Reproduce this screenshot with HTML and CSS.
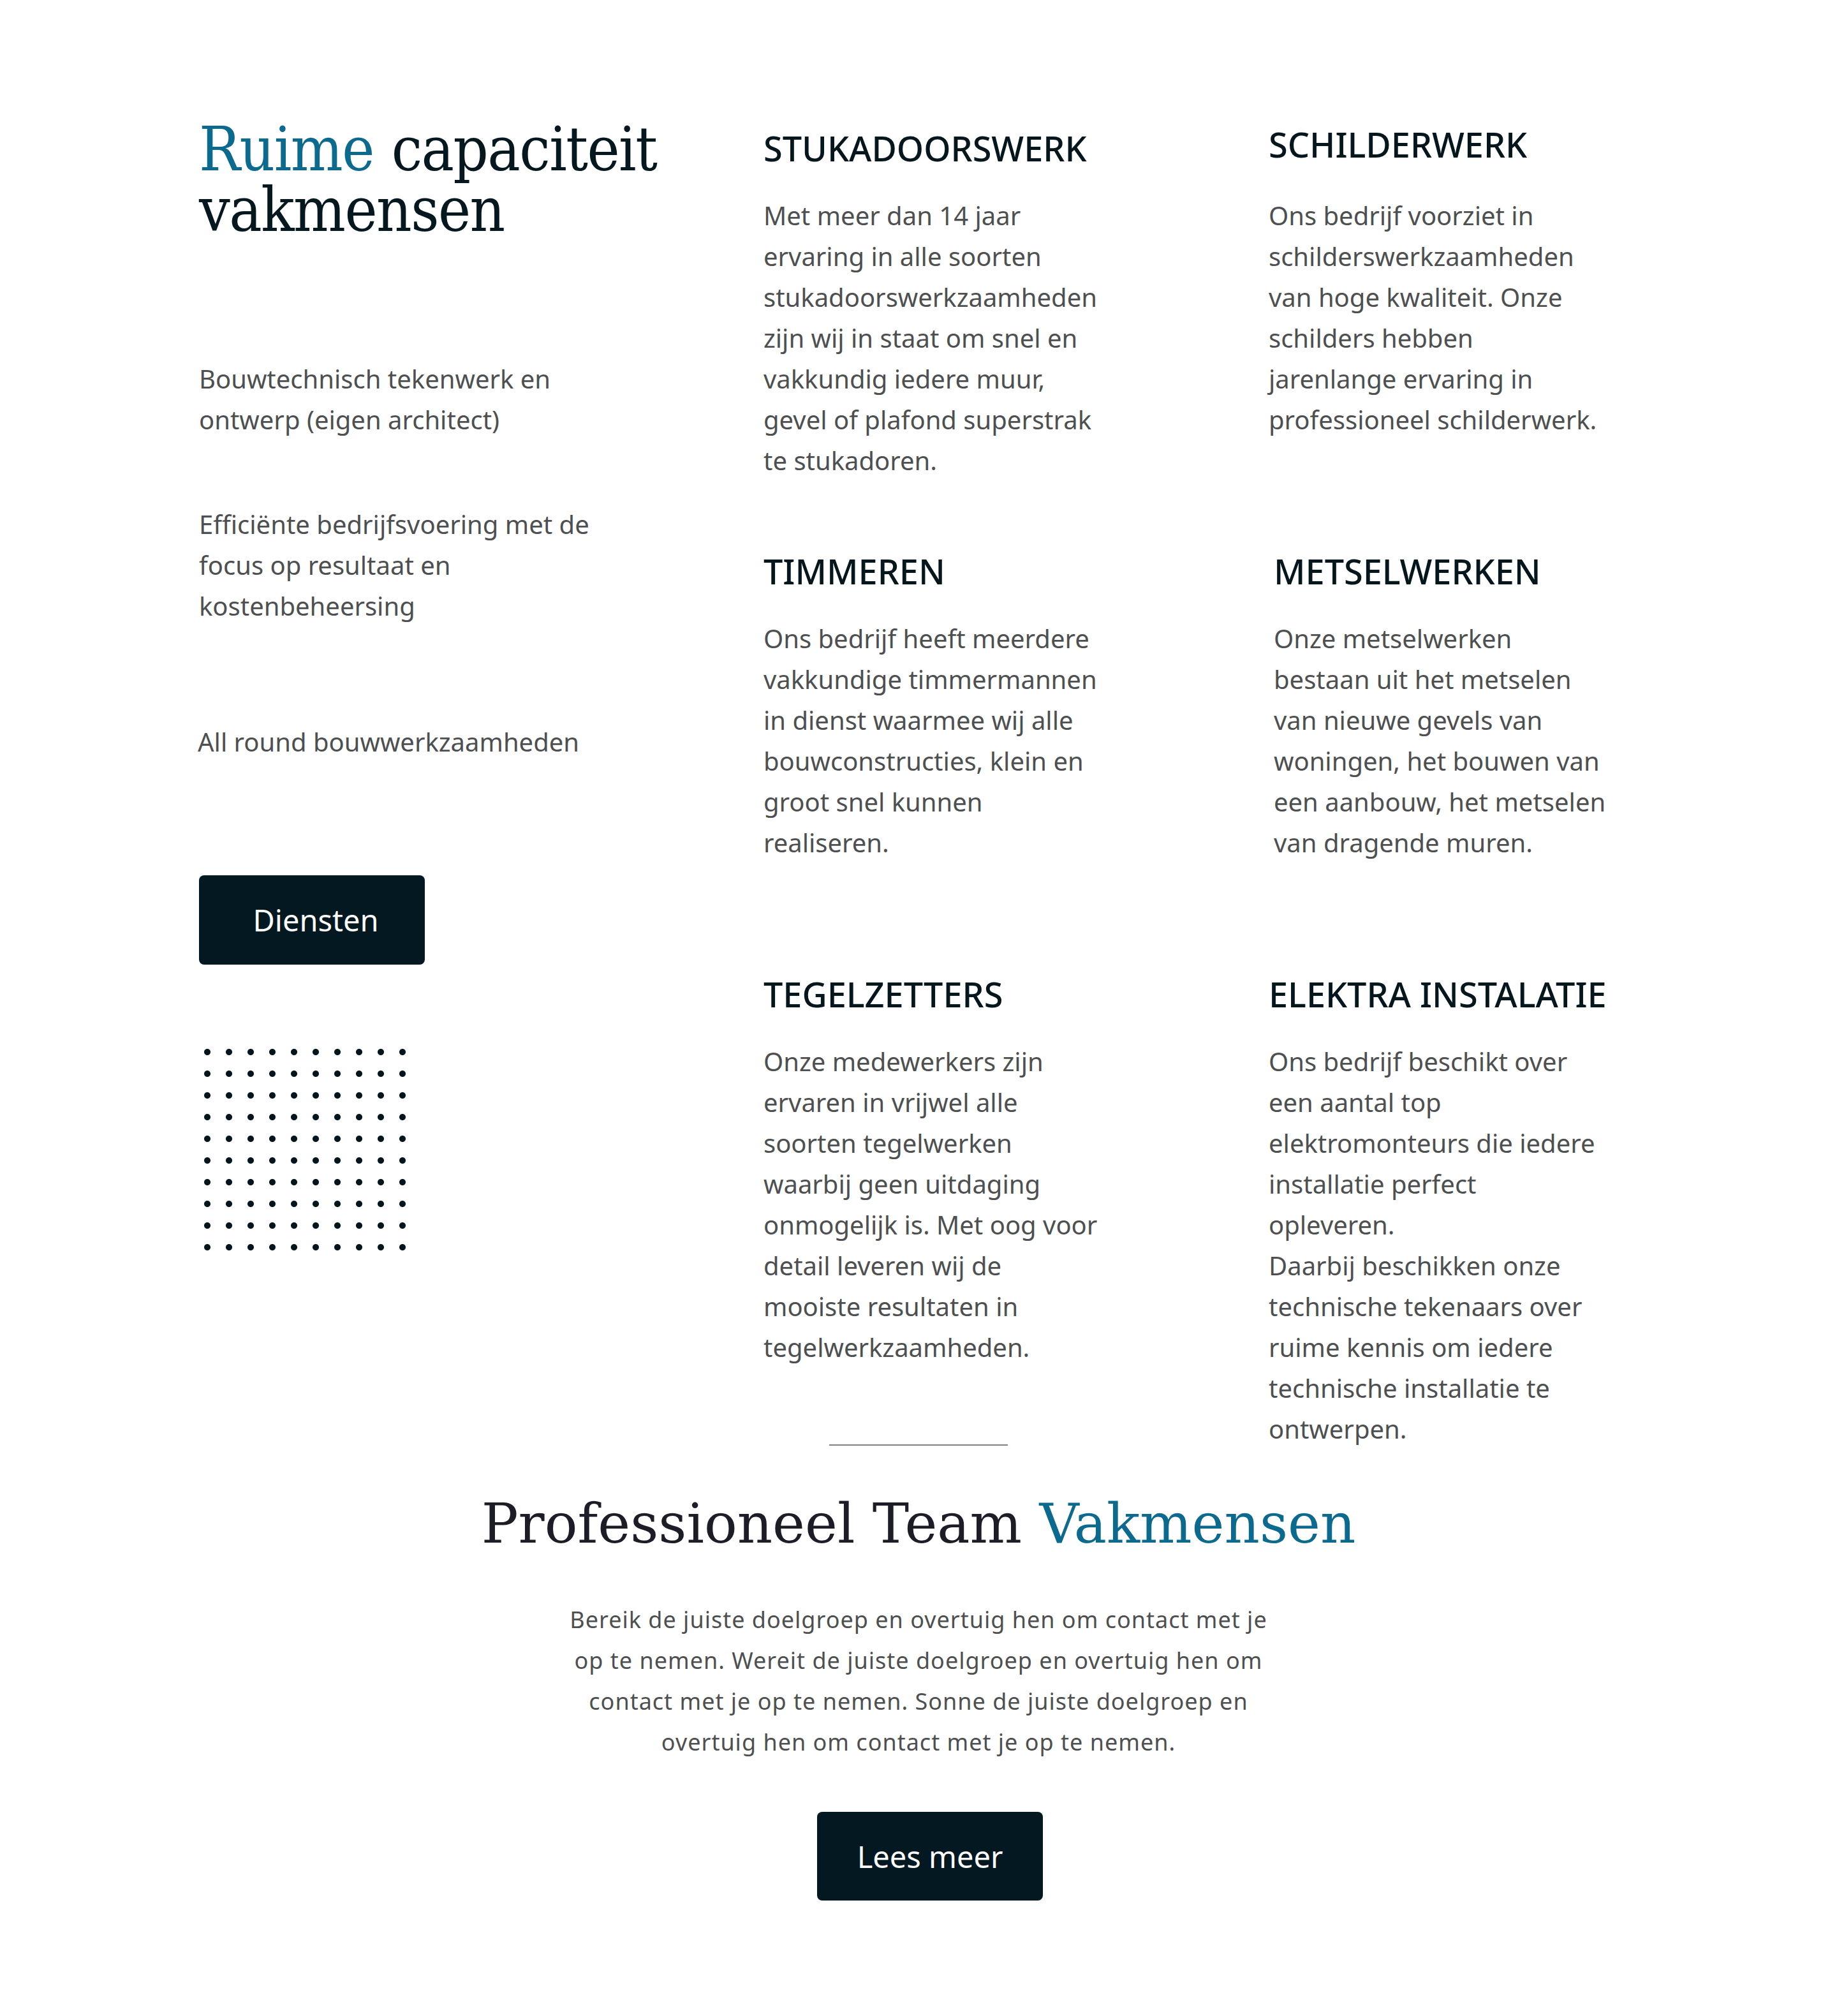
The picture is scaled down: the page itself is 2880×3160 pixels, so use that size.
FILE: index.html
```html
<!DOCTYPE html>
<html lang="nl">
<head>
<meta charset="utf-8">
<title>Ruime capaciteit vakmensen</title>
<link rel="stylesheet" href="styles.css">
</head>
<body>
<main class="page">
  <section class="top">
    <div class="intro">
      <h1 class="intro__title"><span class="accent">Ruime</span> <span>capaciteit</span> <span>vakmensen</span></h1>
      <p class="intro__item intro__item--1">Bouwtechnisch tekenwerk en ontwerp (eigen architect)</p>
      <p class="intro__item intro__item--2">Efficiënte bedrijfsvoering met de focus op resultaat en kostenbeheersing</p>
      <p class="intro__item intro__item--3">All round bouwwerkzaamheden</p>
      <a class="btn intro__btn" href="#">Diensten</a>
      <div class="dots"></div>
    </div>

    <article class="svc">
      <h3 class="svc__title">STUKADOORSWERK</h3>
      <p class="svc__text">Met meer dan 14 jaar ervaring in alle soorten stukadoorswerkzaamheden zijn wij in staat om snel en vakkundig iedere muur, gevel of plafond superstrak te stukadoren.</p>
    </article>
    <article class="svc svc--up">
      <h3 class="svc__title">SCHILDERWERK</h3>
      <p class="svc__text">Ons bedrijf voorziet in schilderswerkzaamheden van hoge kwaliteit. Onze schilders hebben jarenlange ervaring in professioneel schilderwerk.</p>
    </article>

    <article class="svc">
      <h3 class="svc__title">TIMMEREN</h3>
      <p class="svc__text">Ons bedrijf heeft meerdere vakkundige timmermannen in dienst waarmee wij alle bouwconstructies, klein en groot snel kunnen realiseren.</p>
    </article>
    <article class="svc svc--shift">
      <h3 class="svc__title">METSELWERKEN</h3>
      <p class="svc__text">Onze metselwerken bestaan uit het metselen van nieuwe gevels van woningen, het bouwen van een aanbouw, het metselen van dragende muren.</p>
    </article>

    <article class="svc">
      <h3 class="svc__title">TEGELZETTERS</h3>
      <p class="svc__text">Onze medewerkers zijn ervaren in vrijwel alle soorten tegelwerken waarbij geen uitdaging onmogelijk is. Met oog voor detail leveren wij de mooiste resultaten in tegelwerkzaamheden.</p>
    </article>
    <article class="svc">
      <h3 class="svc__title">ELEKTRA INSTALATIE</h3>
      <p class="svc__text">Ons bedrijf beschikt over een aantal top elektromonteurs die iedere installatie perfect opleveren.<br>Daarbij beschikken onze technische tekenaars over ruime kennis om iedere technische installatie te ontwerpen.</p>
    </article>
  </section>

  <section class="team">
    <hr class="team__rule">
    <h2 class="team__title">Professioneel Team <span class="accent">Vakmensen</span></h2>
    <p class="team__text">Bereik de juiste doelgroep en overtuig hen om contact met je op te nemen. Wereit de juiste doelgroep en overtuig hen om contact met je op te nemen. Sonne de juiste doelgroep en overtuig hen om contact met je op te nemen.</p>
    <a class="btn team__btn" href="#">Lees meer</a>
  </section>
</main>
</body>
</html>
```

FILE: styles.css
```css
html, body {
  margin: 0;
  padding: 0;
  background: #ffffff;
}

body {
  font-family: "Noto Sans", "Open Sans", sans-serif;
  color: #4d4f50;
}

.page {
  width: 2880px;
  min-height: 3160px;
  padding-top: 187px;
  box-sizing: border-box;
}

.accent {
  color: #0d6a8f;
}

/* ---------- top grid ---------- */
.top {
  display: grid;
  grid-template-columns: 885px 792px 579px;
  grid-template-rows: 663px 663px 663px;
  padding-left: 312px;
}

.intro {
  grid-column: 1;
  grid-row: 1 / span 3;
  display: flex;
  flex-direction: column;
  align-items: flex-start;
}

.intro__title {
  margin: 0;
  font-family: "DejaVu Serif Condensed", "DejaVu Serif", serif;
  font-stretch: condensed;
  font-weight: 400;
  font-size: 96px;
  line-height: 95px;
  letter-spacing: -1.5px;
  word-spacing: 2px;
  color: #051820;
  width: 760px;
}

.intro__item {
  margin: 0;
  width: 640px;
  font-size: 40px;
  line-height: 64px;
}

.intro__item--1 { margin-top: 185px; }
.intro__item--2 { margin-top: 100px; }
.intro__item--3 { margin-top: 149px; margin-left: -2px; }

.btn {
  display: flex;
  align-items: center;
  justify-content: center;
  box-sizing: border-box;
  width: 354px;
  height: 140px;
  border-radius: 8px;
  background: #031820;
  color: #ffffff;
  font-family: "Noto Sans", "Open Sans", sans-serif;
  font-size: 47px;
  text-decoration: none;
}

.intro__btn {
  margin-top: 177px;
  padding-left: 12px;
}

.dots {
  margin-top: 120px;
  margin-left: -4px;
  width: 340px;
  height: 340px;
  background-image: radial-gradient(circle, #04161d 4.5px, rgba(4, 22, 29, 0) 5.5px);
  background-size: 34px 34px;
}

.svc {
  padding-top: 13px;
}

.svc--up .svc__title {
  margin-top: -6px;
}

.svc--up .svc__text {
  margin-top: 48px;
}

.svc--shift {
  padding-left: 8px;
}

.svc__title {
  margin: 0;
  font-family: "Noto Sans", "Open Sans", sans-serif;
  font-weight: 500;
  font-size: 54px;
  line-height: 64px;
  color: #06161d;
}

.svc__text {
  margin: 42px 0 0;
  width: 528px;
  font-size: 40px;
  line-height: 64px;
}

/* ---------- team ---------- */
.team {
  display: flex;
  flex-direction: column;
  align-items: center;
  padding-top: 88px;
}

.team__rule {
  margin: 0;
  width: 280px;
  height: 2px;
  border: 0;
  background: #808080;
}

.team__title {
  margin: 72px 0 0;
  font-family: "DejaVu Serif", serif;
  font-weight: 400;
  font-size: 86px;
  line-height: 100px;
  color: #1c1d26;
}

.team__text {
  margin: 69px 0 0;
  width: 1110px;
  text-align: center;
  font-size: 36px;
  line-height: 64px;
  letter-spacing: 1px;
  color: #4d4f50;
}

.team__btn {
  margin-top: 77px;
  margin-left: 36px;
  height: 139px;
}
```
